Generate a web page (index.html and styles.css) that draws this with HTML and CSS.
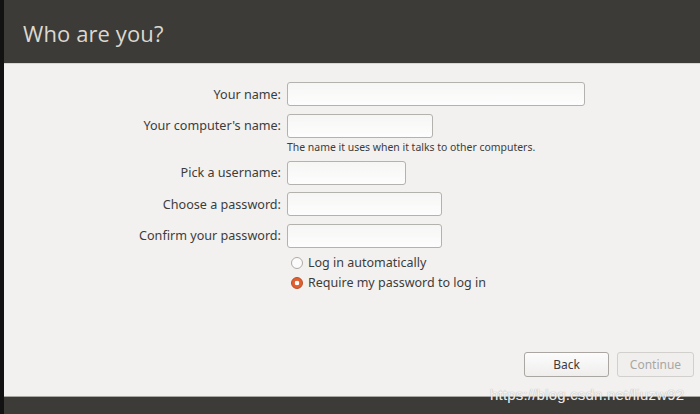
FILE: index.html
```html
<!DOCTYPE html>
<html>
<head>
<meta charset="utf-8">
<link rel="stylesheet" href="styles.css">
</head>
<body>
<div class="window">
  <div class="edge"></div>
  <div class="main">
    <header class="header"><h1 class="title">Who are you?</h1></header>
    <section class="content">
      <div class="form">
        <label class="label">Your name:</label>
        <div class="field"><span class="input w-name"></span></div>

        <label class="label">Your computer's name:</label>
        <div class="field"><span class="input w-comp"></span></div>

        <span></span>
        <div class="hint">The name it uses when it talks to other computers.</div>

        <label class="label">Pick a username:</label>
        <div class="field"><span class="input w-user"></span></div>

        <label class="label">Choose a password:</label>
        <div class="field"><span class="input w-pass"></span></div>

        <label class="label">Confirm your password:</label>
        <div class="field"><span class="input w-pass"></span></div>

        <span></span>
        <div class="radios">
          <div class="radio-row"><span class="radio"></span><span class="radio-text">Log in automatically</span></div>
          <div class="radio-row"><span class="radio on"></span><span class="radio-text">Require my password to log in</span></div>
        </div>
      </div>
      <div class="buttons">
        <span class="btn back">Back</span>
        <span class="btn cont">Continue</span>
      </div>
    </section>
    <footer class="bottom"></footer>
  </div>
  <div class="watermark">https://blog.csdn.net/liuzw92</div>
</div>
</body>
</html>
```
FILE: styles.css
```css
html, body {
  margin: 0;
  padding: 0;
}
body {
  width: 700px;
  height: 414px;
  overflow: hidden;
  font-family: "Noto Sans", "Open Sans", sans-serif;
}
.window {
  position: relative;
  display: flex;
  width: 700px;
  height: 414px;
}
.edge {
  width: 4px;
  background: #121212;
}
.main {
  flex: 1;
  display: flex;
  flex-direction: column;
}
.header {
  height: 63px;
  background: #3c3b37;
  border-bottom: 1px solid #d8d6d2;
  display: flex;
  align-items: center;
  padding-left: 19px;
}
.title {
  margin: 0;
  font-family: "Open Sans", "Noto Sans", sans-serif;
  font-weight: 400;
  font-size: 22px;
  color: #dcd8cf;
  letter-spacing: 0.1px;
  padding-top: 2px;
}
.content {
  flex: 1;
  background: #f2f1f0;
  display: flex;
  flex-direction: column;
  padding-top: 18px;
}
.form {
  display: grid;
  grid-template-columns: 277px auto;
  column-gap: 6px;
  row-gap: 7.5px;
  align-items: center;
}
.label {
  text-align: right;
  font-size: 12.6px;
  color: #3c3c3c;
}
.field {
  display: flex;
}
.input {
  display: block;
  height: 22px;
  border: 1px solid #b4b2ae;
  border-radius: 3px;
  background: linear-gradient(#f6f6f5, #fdfdfd);
}
.w-name { width: 296px; }
.w-comp { width: 144px; }
.w-user { width: 117px; }
.w-pass { width: 153px; }
.hint {
  font-size: 10.45px;
  color: #3c3c3c;
  margin-top: -5px;
  margin-bottom: -1px;
}
.radios {
  display: flex;
  flex-direction: column;
  gap: 5px;
  margin-top: 0;
  padding-left: 4px;
}
.radio-row {
  display: flex;
  align-items: center;
  gap: 5px;
  font-size: 12.5px;
  color: #3c3c3c;
  height: 15px;
}
.radio {
  width: 10px;
  height: 10px;
  border-radius: 50%;
  border: 1px solid #aeaba6;
  background: #fbfbfb;
  box-sizing: content-box;
}
.radio.on {
  border-color: #b84b26;
  background: radial-gradient(circle, #ffffff 0 2px, #e2602f 2.6px);
}
.buttons {
  margin-top: auto;
  margin-bottom: 19px;
  display: flex;
  justify-content: flex-end;
  gap: 8px;
  padding-right: 6px;
}
.btn {
  box-sizing: border-box;
  height: 25px;
  display: flex;
  align-items: center;
  justify-content: center;
  border-radius: 3px;
  font-size: 12px;
}
.back {
  width: 85px;
  border: 1px solid #aaa7a2;
  background: linear-gradient(#fcfcfc, #efeeed);
  color: #3c3c3c;
}
.cont {
  width: 77px;
  border: 1px solid #d2d0cc;
  background: #f0efee;
  color: #a9a7a3;
}
.bottom {
  height: 17px;
  background: #3c3b37;
  border-top: 1px solid #a9a7a2;
}
.watermark {
  position: absolute;
  left: 490px;
  top: 386px;
  font-family: "Liberation Sans", Arial, sans-serif;
  font-size: 15px;
  color: rgba(255, 255, 255, 0.9);
  text-shadow: 0 0 1px rgba(110, 110, 110, 0.7);
  letter-spacing: 0.2px;
}
```
